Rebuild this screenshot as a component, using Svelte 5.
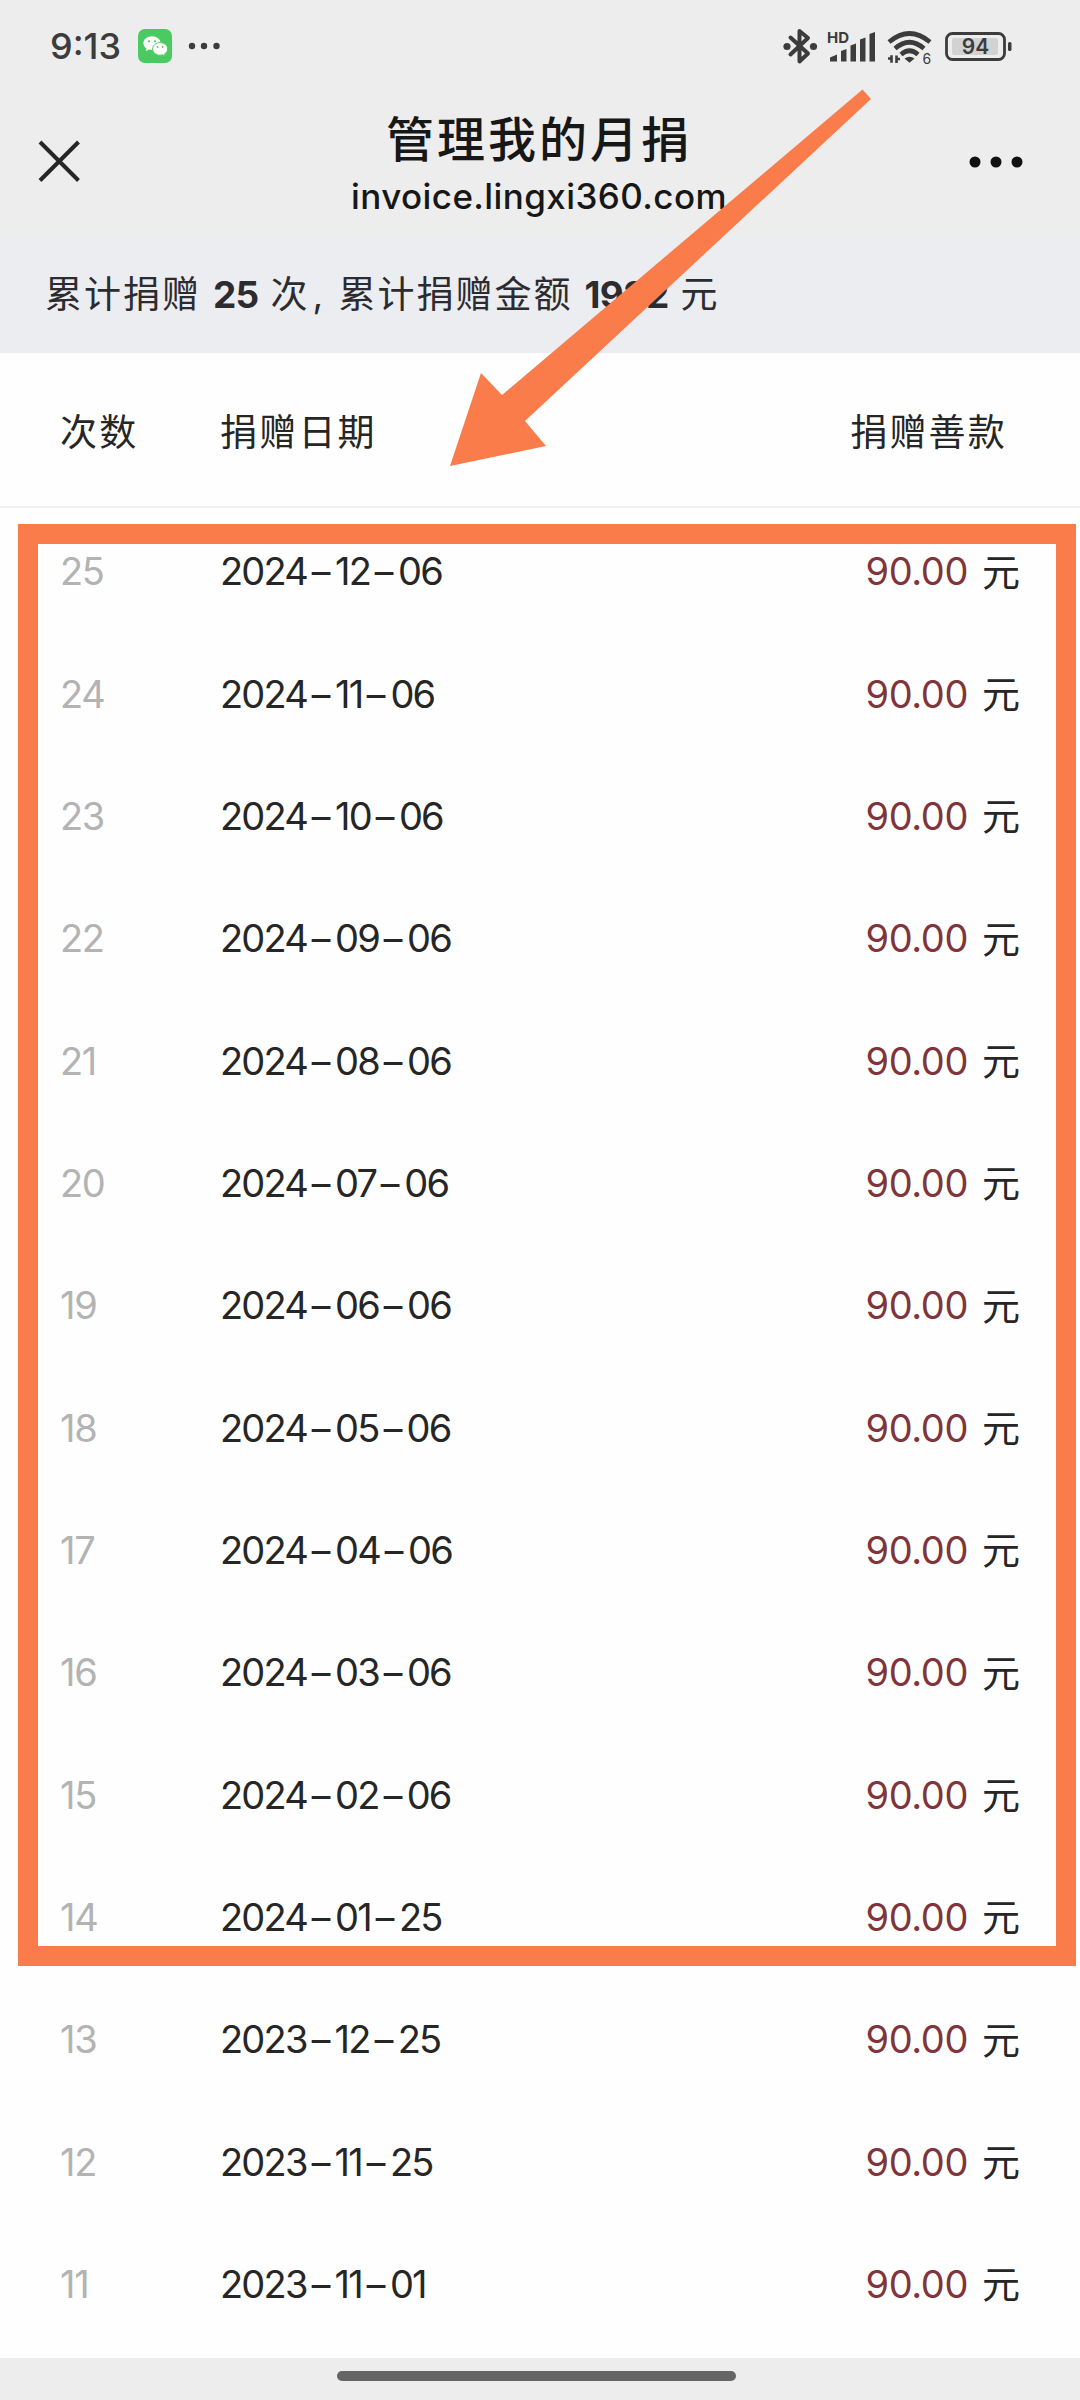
<script>
  const dates = [
    "2024-12-06",
    "2024-11-06",
    "2024-10-06",
    "2024-09-06",
    "2024-08-06",
    "2024-07-06",
    "2024-06-06",
    "2024-05-06",
    "2024-04-06",
    "2024-03-06",
    "2024-02-06",
    "2024-01-25",
    "2023-12-25",
    "2023-11-25",
    "2023-11-01"
  ];
  const total = 25;
  const records = dates.map((date, i) => ({ count: total - i, parts: date.split("-"), amount: "90.00" }));
</script>

<div class="page">
  <div class="status">
    <span class="time">9:13</span>
    <svg class="wechat" width="34" height="34" viewBox="0 0 34 34">
      <rect width="34" height="34" rx="7" fill="#4acb62" />
      <path d="M14 7.2c-4.8 0-8.6 3.1-8.6 7 0 2.200 1.200 4.100 3.100 5.400l-.7 2.600 3-1.600c1 .3 2 .5 3.200.5 4.800 0 8.600-3.100 8.600-6.900s-3.800-7-8.600-7z" fill="#fff" />
      <path d="M22.100 13.600c-4.200 0-7.500 2.800-7.500 6.300s3.300 6.300 7.500 6.300c.9 0 1.800-.1 2.600-.4l2.700 1.400-.7-2.300c1.800-1.100 2.900-2.900 2.900-5 0-3.500-3.300-6.300-7.500-6.300z" fill="#fff" stroke="#4acb62" stroke-width="1" />
      <g fill="#4acb62">
        <circle cx="11" cy="12.300" r="1.100" />
        <circle cx="17" cy="12.300" r="1.100" />
        <circle cx="19.600" cy="18" r=".9" />
        <circle cx="24.600" cy="18" r=".9" />
      </g>
    </svg>
    <svg class="more" width="32" height="8" viewBox="0 0 32 8" fill="#3c3c3c">
      <circle cx="4" cy="4" r="3.200" />
      <circle cx="16" cy="4" r="3.200" />
      <circle cx="28.500" cy="4" r="3.200" />
    </svg>
    <svg class="system" width="232" height="40" viewBox="782 26 232 40" fill="#3c3c3c">
      <path d="M790.500 37.500l17.500 16-8.500 8V31l8.500 7-17.500 16.500" fill="none" stroke="#3c3c3c" stroke-width="4" stroke-linejoin="round" stroke-linecap="round" />
      <circle cx="787" cy="46.500" r="3.600" />
      <circle cx="813.500" cy="46.500" r="3.600" />
      <text x="827" y="42.500" class="hd">HD</text>
      <path d="M830 61.500v-4l7-3v7zM841 61.500V51l5.500-2v12.500zM850.500 61.500V45.500l5.500-2v18zM860 61.500V39.500l5.500-2v24zM869.500 61.500V34l5.500-2v29.500z" />
      <g fill="none" stroke="#3c3c3c" stroke-width="4.600">
        <path d="M889 42q20.500-17 41 0" />
        <path d="M895 48.500q14.500-12.500 29 0" />
        <path d="M901 54.500q8.500-7.500 17 0" />
      </g>
      <path d="M904.500 58.500q5-3.500 10 0l-5 4.200z" />
      <path d="M888 58.500h3.500v4.200v-7.500M896.500 63v-7.500v3.500h3.500" fill="none" stroke="#3c3c3c" stroke-width="2.600" />
      <text x="922.500" y="63.500" class="six">6</text>
      <rect x="946.500" y="33.500" width="58" height="26" rx="6" fill="none" stroke="#3c3c3c" stroke-width="2.800" />
      <rect x="952" y="38" width="46" height="17" rx="2" fill="#d2d2d2" />
      <rect x="1008" y="42" width="3.500" height="9" rx="1.500" />
      <text x="975.500" y="54" class="level" text-anchor="middle">94</text>
    </svg>
  </div>

  <header class="nav">
    <svg width="44" height="44" viewBox="0 0 44 44">
      <path d="M2 2l38.500 38.500M40.500 2L2 40.500" stroke="#262626" stroke-width="4" />
    </svg>
    <div class="heading">
      <h1>管理我的月捐</h1>
      <p>invoice.lingxi360.com</p>
    </div>
    <svg width="54" height="12" viewBox="0 0 54 12" fill="#111">
      <circle cx="6" cy="6" r="5.500" />
      <circle cx="27" cy="6" r="5.500" />
      <circle cx="48" cy="6" r="5.500" />
    </svg>
  </header>

  <p class="summary">累计捐赠 <b>25</b> 次<span class="comma">,</span>累计捐赠金额 <b>1922</b> 元</p>

  <div class="row head">
    <span class="count">次数</span>
    <span class="date">捐赠日期</span>
    <span class="amount">捐赠善款</span>
  </div>
  <div class="list">
    {#each records as record}
      <div class="row">
        <span class="count">{record.count}</span>
        <span class="date">
          {record.parts[0]}<span class="dash">-</span>{record.parts[1]}<span class="dash">-</span>{record.parts[2]}
        </span>
        <span class="money">{record.amount}</span>
        <span class="unit">元</span>
      </div>
    {/each}
  </div>

  <footer><div class="pill"></div></footer>

  <div class="frame"></div>
  <svg class="arrow" width="424" height="380" viewBox="449 88 424 380">
    <path d="M450 466L481 373L502 395L862.500 89.500L871 99L525 421L546 446Z" fill="#f97c4a" />
  </svg>
</div>

<style>
  :global(body) {
    background: #fefefe;
  }
  .page {
    position: relative;
    display: flex;
    flex-direction: column;
    width: 1080px;
    height: 2400px;
    overflow: hidden;
    background: #fefefe;
    color: #262626;
    font-family: Inter, "Noto Sans CJK SC", sans-serif;
    font-size: 37px;
  }
  h1,
  p {
    margin: 0;
  }
  .status {
    display: flex;
    align-items: center;
    box-sizing: border-box;
    height: 92px;
    padding: 0 66px 0 50px;
    background: #ededed;
  }
  .time {
    width: 88px;
    color: #3c3c3c;
    font-size: 36px;
    font-weight: 500;
  }
  .more {
    margin-left: 16px;
  }
  .system {
    margin-left: auto;
  }
  .hd {
    font-size: 15px;
    font-weight: 700;
  }
  .six {
    font-size: 14px;
  }
  .level {
    font-size: 21px;
    font-weight: 600;
  }
  .nav {
    display: flex;
    justify-content: space-between;
    align-items: center;
    box-sizing: border-box;
    height: 143px;
    padding: 0 57px 3px 38px;
    background: #ededed;
    color: #171717;
  }
  .heading {
    margin: 8px 0 0 27px;
    text-align: center;
  }
  h1 {
    font-size: 48px;
    font-weight: 500;
    line-height: 60px;
    letter-spacing: 3px;
  }
  .heading p {
    font-size: 35px;
    font-weight: 500;
    line-height: 52px;
    letter-spacing: 0.4px;
    white-space: nowrap;
  }
  .summary {
    box-sizing: border-box;
    height: 118px;
    padding: 1px 0 0 45px;
    background: #ecedf1;
    color: #2b2b30;
    line-height: 118px;
    letter-spacing: 2px;
    white-space: nowrap;
  }
  .summary b {
    margin: 0 -0.5px;
    letter-spacing: -0.6px;
  }
  .comma {
    display: inline-block;
    width: 26px;
    padding-left: 3px;
  }
  .row {
    display: flex;
    align-items: center;
    height: 122.350px;
    padding: 0 62px 0 60px;
  }
  .head {
    box-sizing: border-box;
    height: 155px;
    border-bottom: 2px solid #f1f1f1;
    letter-spacing: 2.200px;
  }
  .list .row {
    font-size: 38px;
    letter-spacing: -1.800px;
  }
  .list .count,
  .list .date,
  .list .money {
    padding-top: 4px;
  }
  .count {
    width: 160px;
  }
  .list .count {
    color: #b3b3b3;
    letter-spacing: -1.300px;
  }
  .date {
    flex: 1;
  }
  .dash {
    display: inline-block;
    width: 28px;
    text-align: center;
    letter-spacing: 0;
    transform: scaleX(1.550);
  }
  .amount {
    margin-right: 11px;
  }
  .list .money {
    color: #7f353b;
    letter-spacing: -0.400px;
  }
  .list .unit {
    width: 36px;
    margin-left: 14px;
  }
  footer {
    display: flex;
    justify-content: center;
    box-sizing: border-box;
    height: 42px;
    margin-top: auto;
    padding: 13px 8px 0 0;
    background: #ededed;
  }
  .pill {
    width: 399px;
    height: 10px;
    border-radius: 5px;
    background: #656565;
  }
  .frame {
    position: absolute;
    left: 18px;
    top: 524px;
    box-sizing: border-box;
    width: 1058px;
    height: 1442px;
    border: 20px solid #f97c4a;
  }
  .arrow {
    position: absolute;
    left: 449px;
    top: 88px;
  }
</style>
